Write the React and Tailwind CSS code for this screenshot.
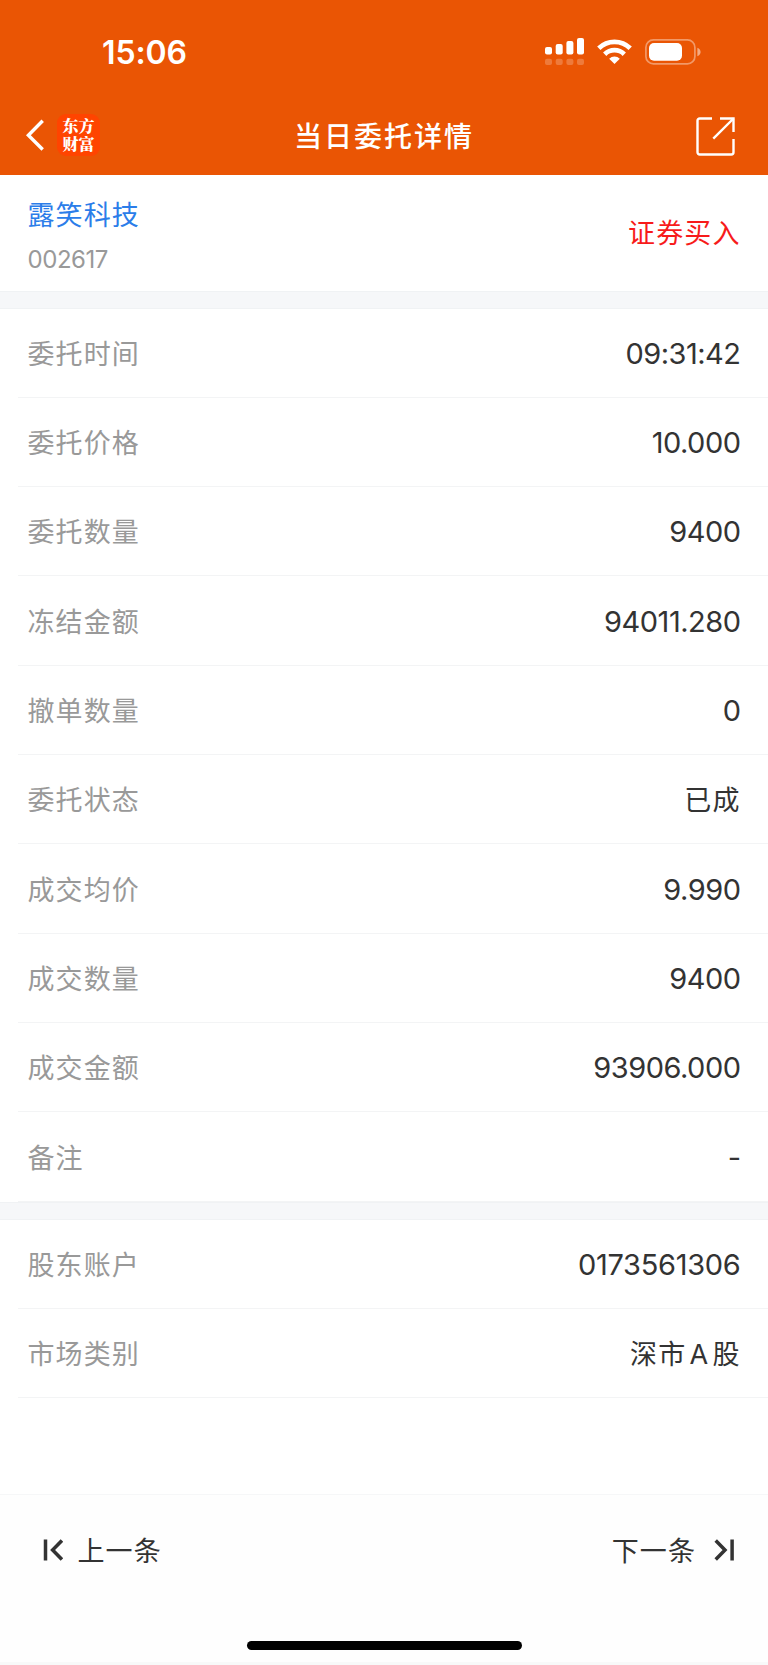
const orderRows = [
  { label: '委托时间', value: '09:31:42' },
  { label: '委托价格', value: '10.000' },
  { label: '委托数量', value: '9400' },
  { label: '冻结金额', value: '94011.280' },
  { label: '撤单数量', value: '0' },
  { label: '委托状态', value: '已成', cjk: true },
  { label: '成交均价', value: '9.990' },
  { label: '成交数量', value: '9400' },
  { label: '成交金额', value: '93906.000' },
  { label: '备注', value: '-' },
];

const accountRows = [
  { label: '股东账户', value: '0173561306', spacing: 'tracking-[-0.3px]' },
  { label: '市场类别', value: '深市 A 股', cjk: true },
];

function StatusBar() {
  return (
    <div className="flex h-[97px] items-start justify-between pl-[102px] pr-[67px] text-white">
      <span className="mt-[37px] text-[32px] leading-[32px] font-semibold tracking-[-0.1px]">15:06</span>
      <div className="mt-[38px] flex items-start">
        {/* Signal */}
        <svg width="39" height="27" viewBox="0 0 39 27" fill="white">
          <rect x="0" y="9" width="7" height="7.5" rx="2" />
          <rect x="10.7" y="6" width="7" height="10.5" rx="2" />
          <rect x="21.4" y="3" width="7" height="13.5" rx="2" />
          <rect x="32" y="0" width="7" height="16.5" rx="2" />
          <g opacity="0.22">
            <rect x="0" y="20.7" width="7" height="6.3" rx="2" />
            <rect x="10.7" y="20.7" width="7" height="6.3" rx="2" />
            <rect x="21.4" y="20.7" width="7" height="6.3" rx="2" />
            <rect x="32" y="20.7" width="7" height="6.3" rx="2" />
          </g>
        </svg>
        {/* Wifi */}
        <svg className="ml-[13.5px] mt-px" width="35" height="25" viewBox="0 0 35 25" fill="none" stroke="white" strokeWidth="4.7">
          <path d="M1.8 9.2a22.4 22.4 0 0 1 31.4 0" />
          <path d="M7.7 15.2a14 14 0 0 1 19.6 0" />
          <path d="M17.5 25l-5.3-5.3a7.6 7.6 0 0 1 10.6 0z" fill="white" stroke="none" />
        </svg>
        {/* Battery */}
        <svg className="ml-[13px] mt-px" width="56" height="26" viewBox="0 0 56 26">
          <rect x="0.9" y="0.9" width="49" height="24" rx="7.5" fill="none" stroke="white" strokeOpacity="0.4" strokeWidth="1.7" />
          <rect x="4" y="4" width="33" height="17.7" rx="5" fill="white" />
          <path d="M52.4 8.7c2 .8 3.2 2.4 3.2 4.3s-1.2 3.5-3.2 4.3z" fill="white" fillOpacity="0.5" />
        </svg>
      </div>
    </div>
  );
}

function NavBar() {
  return (
    <div className="grid h-[77px] grid-cols-3 items-start text-white">
      <div className="flex items-center pl-[25px] pt-[17px]">
        <svg width="20" height="32" viewBox="0 0 20 32" fill="none" stroke="white" strokeWidth="3.4">
          <path d="M17.7 1.8L3.4 16.3l14.3 14.2" />
        </svg>
        <div className="ml-[12px] flex h-[42px] w-[43px] items-center justify-center rounded-[9px] bg-[#ff4400] font-['Noto_Serif_CJK_SC','Noto_Sans_CJK_SC',serif] text-[16px] leading-[18px] font-black">
          <span>东方<br />财富</span>
        </div>
      </div>
      <h1 className="pt-[22px] text-center text-[28px] leading-[36px] font-medium tracking-[2px] whitespace-nowrap">当日委托详情</h1>
      <div className="flex justify-end pr-[33px] pt-[20px]">
        <svg width="39" height="39" viewBox="0 0 39 39" fill="none" stroke="white" strokeWidth="2.4">
          <path d="M16 1.5H3.7a2.2 2.2 0 0 0-2.2 2.2v31.6a2.2 2.2 0 0 0 2.2 2.2h31.6a2.2 2.2 0 0 0 2.2-2.2V22" />
          <path d="M24 1.5h13.5V15" />
          <path d="M37.5 1.5L17.3 21.7" />
        </svg>
      </div>
    </div>
  );
}

function DetailRow({ label, value, cjk, spacing = 'tracking-[-0.5px]' }) {
  return (
    <div className="ml-[18px] flex h-[89.33px] items-center justify-between border-b border-[#f3f4f5] pl-[9.5px] pr-[27.5px]">
      <span className="pt-[4px] text-[27px] leading-[36px] tracking-[1.1px] text-[#999]">{label}</span>
      {cjk ? (
        <span className="pt-[4px] text-[27px] leading-[36px] tracking-[1.1px] [word-spacing:-5.5px] text-[#333]">{value}</span>
      ) : (
        <span className={`pt-[2px] text-[29px] leading-[36px] text-[#333] ${spacing}`}>{value}</span>
      )}
    </div>
  );
}

function Divider() {
  return <div className="h-[18px] border-y border-[#f0f2f4] bg-[#f6f7f9]"></div>;
}

export default function App() {
  return (
    <div className="flex h-[1665px] w-[768px] flex-col overflow-hidden bg-white font-['Inter','Noto_Sans_CJK_SC',sans-serif]">
      <header className="h-[174.5px] shrink-0 bg-[#ea5504]">
        <StatusBar />
        <NavBar />
      </header>

      {/* Stock */}
      <div className="flex h-[116px] items-center justify-between pl-[27.5px] pr-[27.5px]">
        <div className="flex flex-col pt-[10px]">
          <span className="text-[27px] leading-[36px] tracking-[1.1px] text-[#2b7de9]">露笑科技</span>
          <span className="mt-[8px] text-[24px] leading-[36px] tracking-[-0.45px] text-[#999]">002617</span>
        </div>
        <span className="pt-[2px] text-[27px] leading-[36px] tracking-[1.1px] text-[#f71b1b]">证券买入</span>
      </div>

      <Divider />
      <div>
        {orderRows.map((row) => (
          <DetailRow key={row.label} {...row} />
        ))}
      </div>
      <Divider />
      <div>
        {accountRows.map((row) => (
          <DetailRow key={row.label} {...row} />
        ))}
      </div>

      {/* Footer */}
      <footer className="mt-auto flex h-[171px] flex-col items-center border-t border-[#f6f7f8] bg-[#fefefe]">
        <div className="flex h-[110px] w-full items-center justify-between pl-[43px] pr-[34px] text-[27px] leading-[36px] tracking-[1.1px] text-[#333]">
          <div className="flex items-center">
            <svg width="20" height="22" viewBox="0 0 20 22" fill="none" stroke="#333" strokeWidth="3.5">
              <path d="M2.5 0.5v21" />
              <path d="M18.9 1.5L9.6 11l9.3 9.5" />
            </svg>
            <span className="ml-[14.5px] pt-[3px]">上一条</span>
          </div>
          <div className="flex items-center">
            <span className="mr-[18px] pt-[3px]">下一条</span>
            <svg width="20" height="22" viewBox="0 0 20 22" fill="none" stroke="#333" strokeWidth="3.5">
              <path d="M1.7 1.5L11 11l-9.3 9.5" />
              <path d="M18.1 0.5v21" />
            </svg>
          </div>
        </div>
        <div className="mt-[36px] h-[9px] w-[275px] rounded-full bg-black"></div>
        <div className="mt-auto h-[3px] w-full bg-[#f8f9f9]"></div>
      </footer>
    </div>
  );
}
